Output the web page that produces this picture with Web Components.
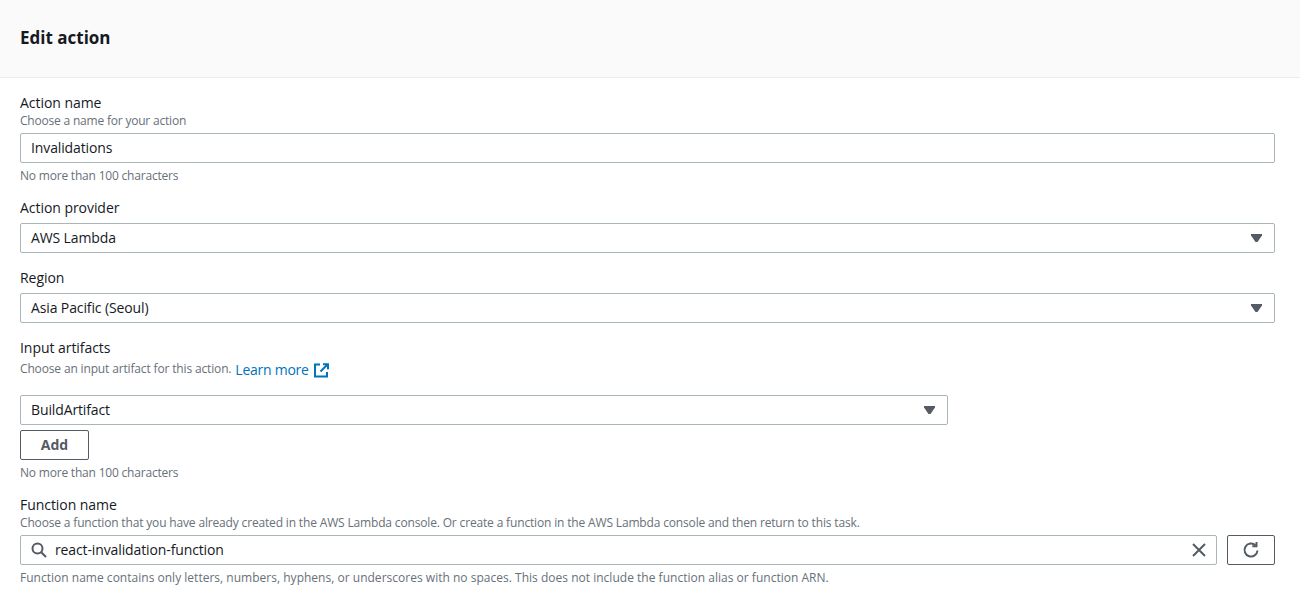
<!DOCTYPE html>
<html>
<head>
<meta charset="utf-8">
<title>Edit action</title>
<style>
  html, body { margin: 0; background: #fff; }
  body { font-family: "Open Sans", "Liberation Sans", sans-serif; color: #16191f; overflow: hidden; }
  form-field + form-field { margin-top: 15px; }
</style>
</head>
<body>
<edit-panel heading="Edit action">
  <form-field label="Action name" description="Choose a name for your action" hint="No more than 100 characters">
    <text-box value="Invalidations"></text-box>
  </form-field>
  <form-field label="Action provider">
    <select-box value="AWS Lambda"></select-box>
  </form-field>
  <form-field label="Region">
    <select-box value="Asia Pacific (Seoul)"></select-box>
  </form-field>
  <form-field label="Input artifacts">
    <span slot="description">Choose an input artifact for this action. <ext-link>Learn more</ext-link></span>
    <artifact-picker value="BuildArtifact"></artifact-picker>
  </form-field>
  <form-field label="Function name" wide-hint
    description="Choose a function that you have already created in the AWS Lambda console. Or create a function in the AWS Lambda console and then return to this task."
    hint="Function name contains only letters, numbers, hyphens, or underscores with no spaces. This does not include the function alias or function ARN.">
    <function-search value="react-invalidation-function"></function-search>
  </form-field>
</edit-panel>

<script>
const SMALL_CSS = `font-size: 12px; line-height: 16px; color: #687078; letter-spacing: -0.2px;`;
const HINT_CSS = `${SMALL_CSS} margin-top: 5px; margin-bottom: -1px;`;

class EditPanel extends HTMLElement {
  constructor() {
    super();
    this.attachShadow({ mode: "open" });
  }
  connectedCallback() {
    this.shadowRoot.innerHTML = `
    <style>
      :host { display: block; }
      header {
        height: 75px;
        background: #fafafa;
        border-bottom: 1px solid #eaeded;
        display: flex;
        align-items: center;
        padding: 0 20px 2px;
      }
      h2 { margin: 0; font-size: 17px; font-weight: 700; line-height: 20px; color: #16191f; }
      .content { padding: 15px 25px 0 20px; }
    </style>
    <header><h2>${this.getAttribute("heading")}</h2></header>
    <div class="content"><slot></slot></div>`;
  }
}
customElements.define("edit-panel", EditPanel);

class FormField extends HTMLElement {
  constructor() {
    super();
    this.attachShadow({ mode: "open" });
  }
  connectedCallback() {
    const desc = this.getAttribute("description");
    const hint = this.getAttribute("hint");
    const hasSlotted = this.querySelector("[slot=description]");
    this.shadowRoot.innerHTML = `
    <style>
      :host { display: block; }
      .label { font-size: 14px; line-height: 20px; color: #16191f; letter-spacing: -0.05px; }
      .label.plain { margin-bottom: 5px; }
      .desc { ${SMALL_CSS} margin-bottom: 4px; }
      ::slotted([slot=description]) { display: block; ${SMALL_CSS} line-height: 22px; letter-spacing: -0.15px; }
      .hint { ${HINT_CSS} }
      :host([wide-hint]) .desc { letter-spacing: -0.16px; }
      :host([wide-hint]) .hint { letter-spacing: 0.015px; }
    </style>
    <div class="label ${desc || hasSlotted ? "" : "plain"}">${this.getAttribute("label")}</div>
    ${desc ? `<div class="desc">${desc}</div>` : ""}
    <slot name="description"></slot>
    <slot></slot>
    ${hint ? `<div class="hint">${hint}</div>` : ""}`;
  }
}
customElements.define("form-field", FormField);

const BOX_CSS = `
  .box {
    box-sizing: border-box;
    height: 30px;
    border: 1px solid #aab7b8;
    border-radius: 2px;
    background: #fff;
    display: flex;
    align-items: center;
    padding: 0 10px;
    font-size: 14px;
    letter-spacing: -0.12px;
    color: #16191f;
  }
  .grow { flex: 1; white-space: nowrap; line-height: 20px; }
`;

class TextBox extends HTMLElement {
  constructor() {
    super();
    this.attachShadow({ mode: "open" });
  }
  connectedCallback() {
    this.shadowRoot.innerHTML = `
    <style>:host { display: block; } ${BOX_CSS}</style>
    <div class="box"><span class="grow">${this.getAttribute("value")}</span></div>`;
  }
}
customElements.define("text-box", TextBox);

class SelectBox extends HTMLElement {
  constructor() {
    super();
    this.attachShadow({ mode: "open" });
  }
  connectedCallback() {
    this.shadowRoot.innerHTML = `
    <style>
      :host { display: block; }
      ${BOX_CSS}
      svg { display: block; margin-right: 2px; }
    </style>
    <div class="box">
      <span class="grow">${this.getAttribute("value")}</span>
      <svg width="11" height="8" viewBox="0 0 11 8"><path d="M0 0h11v1.5L6.5 8h-2L0 1.5z" fill="#545b64"/></svg>
    </div>`;
  }
}
customElements.define("select-box", SelectBox);

class ExtLink extends HTMLElement {
  constructor() {
    super();
    this.attachShadow({ mode: "open" });
  }
  connectedCallback() {
    this.shadowRoot.innerHTML = `
    <style>
      :host { display: inline-flex; align-items: center; gap: 5px; font-size: 14px; line-height: 16px; color: #0073bb; letter-spacing: -0.25px; vertical-align: -2px; margin-left: 1px; }
      svg { display: block; }
    </style>
    <slot></slot>
    <svg width="15" height="15" viewBox="0 0 15 15" fill="none" stroke="#0073bb" stroke-width="2">
      <path d="M6 1.5H1v12h12V9"/>
      <path d="M9 1.2h5v5M13.6 1.4L6.5 8.5"/>
    </svg>`;
  }
}
customElements.define("ext-link", ExtLink);

class AppButton extends HTMLElement {
  constructor() {
    super();
    this.attachShadow({ mode: "open" });
  }
  connectedCallback() {
    this.shadowRoot.innerHTML = `
    <style>
      :host { display: block; }
      button {
        box-sizing: border-box;
        display: flex;
        align-items: center;
        justify-content: center;
        width: 100%;
        height: 30px;
        padding: 0 0 2px;
        border: 1px solid #545b64;
        border-radius: 2px;
        background: #fff;
        color: #545b64;
        font: 700 14px "Open Sans", "Liberation Sans", sans-serif;
      }
      :host([icon]) button { padding: 0; }
    </style>
    <button type="button"><slot></slot></button>`;
  }
}
customElements.define("app-button", AppButton);

class ArtifactPicker extends HTMLElement {
  constructor() {
    super();
    this.attachShadow({ mode: "open" });
  }
  connectedCallback() {
    this.shadowRoot.innerHTML = `
    <style>
      :host { display: block; margin-top: 15px; }
      select-box { width: 928px; }
      app-button { width: 69px; margin-top: 5px; }
      .hint { ${HINT_CSS} }
    </style>
    <select-box value="${this.getAttribute("value")}"></select-box>
    <app-button>Add</app-button>
    <div class="hint">No more than 100 characters</div>`;
  }
}
customElements.define("artifact-picker", ArtifactPicker);

class FunctionSearch extends HTMLElement {
  constructor() {
    super();
    this.attachShadow({ mode: "open" });
  }
  connectedCallback() {
    this.shadowRoot.innerHTML = `
    <style>
      :host { display: flex; gap: 10px; }
      ${BOX_CSS}
      .box { flex: 1; gap: 8px; padding-right: 9px; }
      app-button { width: 48px; }
      svg { display: block; flex: none; }
    </style>
    <div class="box">
      <svg width="16" height="16" viewBox="0 0 16 16" fill="none" stroke="#545b64" stroke-width="2">
        <circle cx="6.5" cy="6.5" r="5"/><path d="M10.2 10.2L15 15"/>
      </svg>
      <span class="grow">${this.getAttribute("value")}</span>
      <svg width="16" height="16" viewBox="0 0 16 16" fill="none" stroke="#545b64" stroke-width="2">
        <path d="M2 2l12 12M14 2L2 14"/>
      </svg>
    </div>
    <app-button icon>
      <svg width="18" height="18" viewBox="0 0 18 18" fill="none" stroke="#545b64" stroke-width="2">
        <path d="M15.5 9.5a6.5 6.5 0 1 1-2-5.2"/><path d="M14.5 1v4.2h-4.2"/>
      </svg>
    </app-button>`;
  }
}
customElements.define("function-search", FunctionSearch);
</script>
</body>
</html>
